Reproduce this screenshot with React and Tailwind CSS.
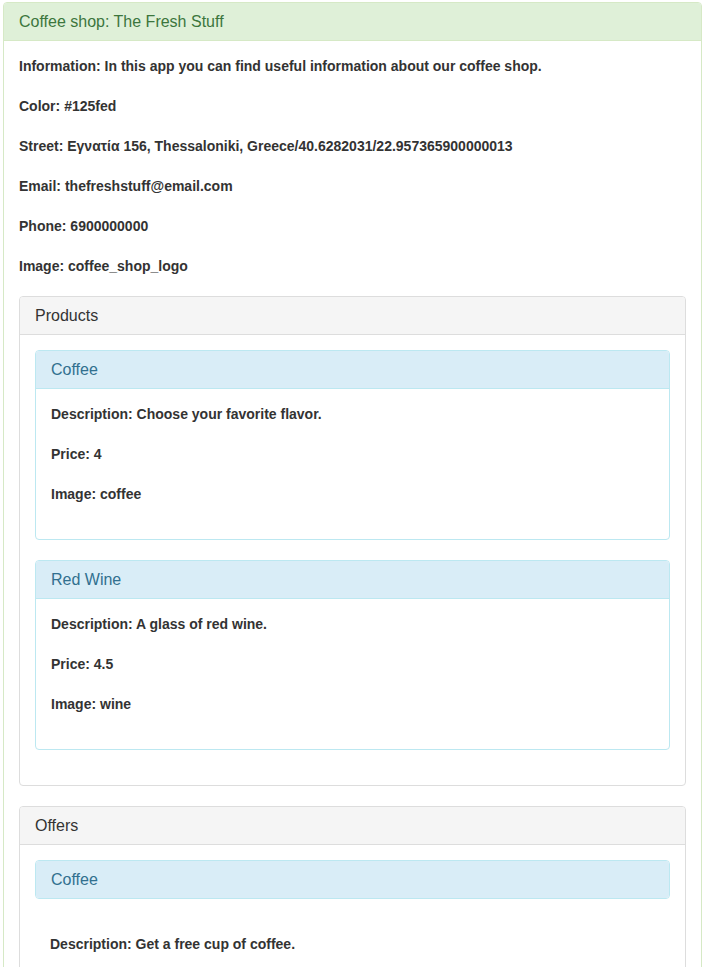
export default function App() {
  const info = [
    ["Information", "In this app you can find useful information about our coffee shop."],
    ["Color", "#125fed"],
    ["Street", "Εγνατία 156, Thessaloniki, Greece/40.6282031/22.957365900000013"],
    ["Email", "thefreshstuff@email.com"],
    ["Phone", "6900000000"],
    ["Image", "coffee_shop_logo"],
  ];

  const products = [
    { name: "Coffee", desc: "Choose your favorite flavor.", price: "4", image: "coffee" },
    { name: "Red Wine", desc: "A glass of red wine.", price: "4.5", image: "wine" },
  ];

  return (
    <div
      className="h-[967px] overflow-hidden bg-white pt-[2px] pl-[3px] pr-[4px] text-[#333] text-sm"
      style={{ fontFamily: '"Liberation Sans", Arial, sans-serif' }}
    >
      {/* main panel */}
      <div className="border border-[#d6e9c6] rounded-[4px] min-h-[980px]">
        <div className="bg-[#dff0d8] border-b border-[#d6e9c6] rounded-t-[3px] px-[15px] py-[10px]">
          <h3 className="text-[16px] leading-[17px] text-[#3c763d]">
            Coffee shop: The Fresh Stuff
          </h3>
        </div>
        <div className="p-[15px]">
          {info.map(([k, v]) => (
            <p key={k} className="font-bold leading-5 mb-5">
              {k}: {v}
            </p>
          ))}

          {/* products */}
          <div className="border border-[#ddd] rounded-[4px] mb-5">
            <div className="bg-[#f5f5f5] border-b border-[#ddd] rounded-t-[3px] px-[15px] py-[10px]">
              <h3 className="text-[16px] leading-[17px] text-[#333]">Products</h3>
            </div>
            <div className="p-[15px]">
              {products.map((p) => (
                <div key={p.name} className="border border-[#bce8f1] rounded-[4px] mb-5">
                  <div className="bg-[#d9edf7] border-b border-[#bce8f1] rounded-t-[3px] px-[15px] py-[10px]">
                    <h3 className="text-[16px] leading-[17px] text-[#31708f]">{p.name}</h3>
                  </div>
                  <div className="p-[15px]">
                    <p className="font-bold leading-5 mb-5">Description: {p.desc}</p>
                    <p className="font-bold leading-5 mb-5">Price: {p.price}</p>
                    <p className="font-bold leading-5 mb-5">Image: {p.image}</p>
                  </div>
                </div>
              ))}
            </div>
          </div>

          {/* offers */}
          <div className="border border-[#ddd] rounded-[4px] mb-5">
            <div className="bg-[#f5f5f5] border-b border-[#ddd] rounded-t-[3px] px-[15px] py-[10px]">
              <h3 className="text-[16px] leading-[17px] text-[#333]">Offers</h3>
            </div>
            <div className="p-[15px]">
              <div className="border border-[#bce8f1] rounded-[4px] mb-5">
                <div className="bg-[#d9edf7] rounded-[3px] px-[15px] py-[10px]">
                  <h3 className="text-[16px] leading-[17px] text-[#31708f]">Coffee</h3>
                </div>
              </div>
              <div className="pl-[15px] pt-[15px]">
                <p className="font-bold leading-5 mb-5">Description: Get a free cup of coffee.</p>
              </div>
            </div>
          </div>
        </div>
      </div>
    </div>
  );
}
